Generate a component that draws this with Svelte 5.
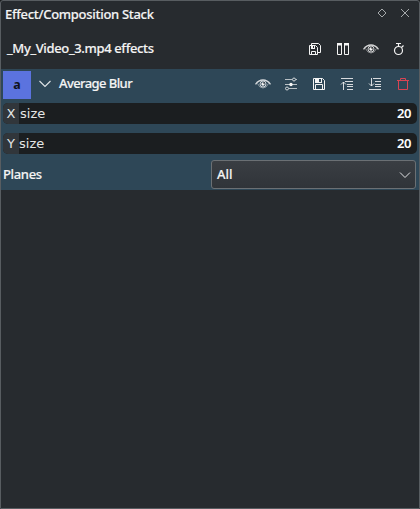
<script>
  const top = ['saveAll', 'split', 'eye', 'timer'];
  const tools = ['eye', 'adjust', 'save', 'up', 'down', 'trash'];
  const sliders = [{ key: 'X', label: 'size', value: 20 }, { key: 'Y', label: 'size', value: 20 }];
</script>

{#snippet icon(name)}
  <svg class="icon" class:danger={name === 'trash'} width="16" height="16" viewBox="0 0 16 16" fill="none" stroke="currentColor">
    {#if name === 'saveAll'}
      <path d="M2.500 4.500h6l2 2v7h-8zM4.500 13.500v-3h4v3M4.500 4.500v-2h7l2 2v7h-3" />
      <path d="M4 5h4v3H4z" fill="currentColor" stroke="none" />
      <path class="hole" d="M6 5h1v2H6z" stroke="none" />
    {:else if name === 'split'}
      <path d="M2.500 2.500h4v11h-4zM9.500 2.500h4v11h-4z" />
      <path d="M2 2h5v2.500H2zM9 2h5v2.500H9z" fill="currentColor" stroke="none" />
    {:else if name === 'eye'}
      <path d="M.5 8.400Q3.500 4 8 4t7.500 4.400" stroke-width="1.300" stroke-opacity=".85" />
      <path d="M2.500 7.500Q4.500 12 8 12t5.500-4.500" stroke-width=".7" stroke-opacity=".7" />
      <circle cx="8" cy="8" r="3" stroke-opacity=".8" />
      <circle cx="8" cy="8" r="1.700" fill="currentColor" stroke="none" />
      <circle class="hole" cx="9" cy="7" r=".8" stroke="none" />
    {:else if name === 'timer'}
      <circle cx="7.500" cy="9.500" r="4" stroke-width="1.200" />
      <path d="M5 2.500h5M7.500 3v3M10.500 6.500l2-2" stroke-width="1.200" />
    {:else if name === 'adjust'}
      <path d="M2 3.500h7M13 3.500h1M2 8.500h12M6 12.500h8" stroke-opacity=".7" />
      <circle cx="11" cy="3.500" r="1.500" stroke-opacity=".8" /><circle cx="4" cy="12.500" r="1.500" stroke-opacity=".8" />
      <circle cx="8" cy="8.500" r="1.700" fill="currentColor" stroke="none" />
    {:else if name === 'save'}
      <path d="M2.500 2.500h9l2 2v9h-11zM4.500 13.500v-5h7v5" />
      <path d="M4 2h7v5H4z" fill="currentColor" stroke="none" />
      <path class="slot" d="M8 3h2v3H8z" stroke="none" />
    {:else if name === 'up'}
      <path d="M2 2.500h12M6 5.500h8M8 8.500h6M8 10.500h6M8 13.500h6M4.500 14V6M2 8.500L4.500 6 7 8.500" stroke-opacity=".85" />
    {:else if name === 'down'}
      <path d="M6 2.500h8M8 5.500h6M8 8.500h6M8 10.500h6M2 13.500h12M4.500 2v8M2 7.500L4.500 10 7 7.500" stroke-opacity=".85" />
    {:else}
      <path d="M2 4.500h12M5.500 4.500v-2h5v2M3.500 4.500v9h9v-9" />
    {/if}
  </svg>
{/snippet}

<section class="panel">
  <header class="title">
    <span class="txt t1">Effect/Composition Stack</span>
    <svg width="36" height="12" viewBox="0 0 36 12" fill="none" stroke="#a5a9ab"><path d="M1 6L5 2l4 4-4 4zM24 2l8 8M32 2l-8 8" /></svg>
  </header>
  <div class="source">
    <span class="txt t2">_My_Video_3.mp4 effects</span>
    <div class="icons">{#each top as n}{@render icon(n)}{/each}</div>
  </div>
  <div class="effect">
    <div class="head">
      <div class="badge">a</div>
      <svg class="chev" width="14" height="8" viewBox="0 0 14 8" fill="none" stroke="#e1e5e8" stroke-width="1.100"><path d="M1.500 1L7 6.500 12.500 1" /></svg>
      <span class="txt t3">Average Blur</span>
      <div class="icons">{#each tools as n}{@render icon(n)}{/each}</div>
    </div>
    {#each sliders as s}
      <div class="slider"><span class="key">{s.key}</span><span class="label">{s.label}</span><b>{s.value}</b></div>
    {/each}
    <div class="planes">
      <span class="txt t4">Planes</span>
      <div class="combo"><span class="txt t5">All</span>
        <svg width="12" height="8" viewBox="0 0 12 8" fill="none" stroke="#e2e3e4"><path d="M1 1.500l5 5 5-5" /></svg>
      </div>
    </div>
  </div>
</section>

<style>
  :global(body) { background: #191c1e; }
  .panel { box-sizing: border-box; width: 420px; height: 509px; border: 1px solid #585d61; border-radius: 3px 3px 0 0; background: #272b2f; color: #f4f4f4; font-family: "Noto Sans", "Open Sans", sans-serif; font-size: 13px; font-weight: 500; overflow: hidden; }
  .txt { white-space: nowrap; display: inline-block; line-height: 20px; -webkit-text-stroke: .15px currentColor; }
  .t1 { letter-spacing: -.3px; }
  .t2 { letter-spacing: -.35px; }
  .t3 { letter-spacing: -.58px; }
  .t4 { letter-spacing: -.35px; }
  .title { height: 26px; display: flex; align-items: center; justify-content: space-between; padding: 0 6px 0 4px; box-sizing: border-box; }
  .title svg { margin-bottom: 2px; }
  .source { height: 42px; display: flex; align-items: center; justify-content: space-between; padding: 0 12px 0 6px; box-sizing: border-box; }
  .icons { display: flex; gap: 12px; }
  .source .icons { margin-top: 2px; }
  .icon { display: block; flex: none; }
  .danger { color: #da4453; }
  .slot { fill: #2e4757; }
  .hole { fill: #272b2f; }
  .effect { background: #2e4757; height: 121px; }
  .head { height: 34px; display: flex; align-items: flex-start; padding: 0 8px 0 2px; }
  .head .icons { margin: 7px 0 0 auto; }
  .badge { width: 28px; height: 28px; margin-top: 2px; background: #5b73df; color: #10131c; text-align: center; line-height: 28px; font-size: 12.500px; font-weight: 700; }
  .chev { margin: 11px 0 0 7px; }
  .t3 { margin: 4px 0 0 7px; }
  .t4, .t5 { margin-top: -1px; }
  .slider { height: 21px; margin: 0 2px 9px; border-radius: 5px; background: #1b1e20; display: flex; align-items: center; overflow: hidden; font-family: "DejaVu Sans", sans-serif; font-weight: 400; line-height: 21px; color: #e5e6e6; }
  .slider + .slider { margin-bottom: 1px; }
  .key { width: 16px; background: #31363b; height: 21px; text-align: center; }
  .label { margin-left: 1px; }
  .slider + .slider .label { margin-left: 0; }
  b { margin-left: auto; padding-right: 6px; font: 600 13px/21px "Noto Sans", sans-serif; letter-spacing: -.4px; color: #fff; }
  .planes { height: 35px; display: flex; align-items: center; justify-content: space-between; padding: 4px 3px 0 2px; box-sizing: border-box; }
  .combo { box-sizing: border-box; width: 205px; height: 29px; border: 1px solid #6b7074; border-radius: 3px; background: linear-gradient(#3a3e43, #303439); display: flex; align-items: center; justify-content: space-between; padding: 0 4px 0 5px; }
</style>
